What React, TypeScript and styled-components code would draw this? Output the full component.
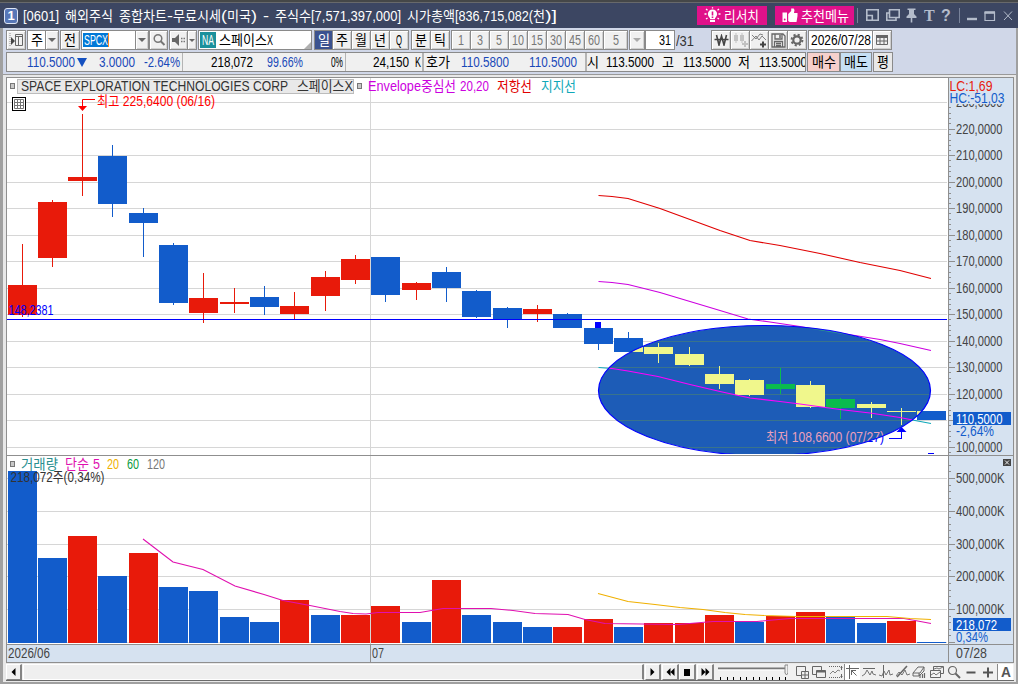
import React, { useLayoutEffect, useRef } from "react";
import styled, { createGlobalStyle, css } from "styled-components";

const FONT = `"Liberation Sans", "Noto Sans CJK KR", sans-serif`;
const RED = "#e81a0a";
const BLUE = "#125ccb";
const GRID = "#d6d6d6";
const LINE = "#8f8f8f";

const Global = createGlobalStyle`
  *, *::before, *::after { box-sizing: border-box; }
  body { margin: 0; background: #a0a0a0; font-family: ${FONT}; overflow: hidden; }
  svg { display: block; flex: none; }
`;

/* ---------- condensed fixed-pitch text ---------- */

const RunBox = styled.span<{ $w: number }>`
  display: inline-block;
  width: ${(p) => p.$w}px;
  height: 100%;
  white-space: pre;
  flex: none;
`;
const RunInner = styled.span`
  display: inline-block;
  transform-origin: 0 50%;
  white-space: pre;
`;
const Line = styled.span<{ $c?: string; $ml?: number; $size?: number; $bold?: boolean }>`
  display: inline-flex;
  flex: none;
  white-space: pre;
  margin-left: ${(p) => p.$ml ?? 0}px;
  color: ${(p) => p.$c ?? "#000"};
  font-size: ${(p) => p.$size ?? 14}px;
  font-weight: ${(p) => (p.$bold ? 700 : 400)};
  line-height: 16px;
  height: 16px;
`;

function Run({ text, w }: { text: string; w: number }) {
  const ref = useRef<HTMLSpanElement>(null);
  useLayoutEffect(() => {
    const el = ref.current;
    if (!el) return;
    el.style.transform = "none";
    const natural = el.getBoundingClientRect().width;
    if (natural > 0) el.style.transform = `scaleX(${w / natural})`;
  }, [text, w]);
  return (
    <RunBox $w={w}>
      <RunInner ref={ref}>{text}</RunInner>
    </RunBox>
  );
}

const isWide = (s: string) => /[\uAC00-\uD7A3]/.test(s);

type TextProps = { children: string; c?: string; ml?: number; w?: number; size?: number; bold?: boolean };

/* Latin cells are 6px wide and Hangul cells 12px, unless a total width is given. */
function T({ children, c, ml, w, size, bold }: TextProps) {
  if (w) {
    return (
      <Line $c={c} $ml={ml} $size={size} $bold={bold}>
        <Run text={children} w={w} />
      </Line>
    );
  }
  const runs = children.match(/[\uAC00-\uD7A3]+|\s+|[^\uAC00-\uD7A3\s]+/g) ?? [];
  return (
    <Line $c={c} $ml={ml} $size={size} $bold={bold}>
      {runs.map((r, i) => (
        <Run key={i} text={r} w={r.length * (isWide(r) ? 12 : 6)} />
      ))}
    </Line>
  );
}

/* ---------- window frame ---------- */

const Window = styled.div`
  width: 1018px;
  height: 684px;
  display: flex;
  flex-direction: column;
  background: #a0a0a0;
  overflow: hidden;
`;
const TopStrip = styled.div`
  height: 3px;
  background: #454748;
  border-bottom: 1px solid #68696b;
`;
const TitleBar = styled.header`
  height: 25px;
  background: #3c4662;
  display: flex;
  align-items: center;
  padding-left: 4px;
`;
const Badge = styled.span`
  width: 14px;
  height: 16px;
  flex: none;
  border-radius: 3px;
  border: 1px solid #dfe6f5;
  background: #5877b8;
  color: #fff;
  font-size: 13px;
  font-weight: 700;
  line-height: 14px;
  text-align: center;
  margin-right: 5px;
`;
const Pill = styled.button<{ $w: number; $ml: number }>`
  all: unset;
  box-sizing: border-box;
  flex: none;
  width: ${(p) => p.$w}px;
  height: 19px;
  margin-left: ${(p) => p.$ml}px;
  background: #e0118a;
  display: flex;
  align-items: center;
  padding-left: 7px;
`;
const Body = styled.div`
  flex: 1;
  display: flex;
  flex-direction: column;
  margin: 0 2px 2px 3px;
  background: #e8e8e8;
`;

/* ---------- toolbar ---------- */

const Tools = styled.div`
  height: 47px;
  background: #d0d7e8;
  border-bottom: 1px solid #999;
  padding: 2px 0 0 3px;
`;
const Row = styled.div`
  height: 20px;
  display: flex;
  align-items: stretch;
  margin-bottom: 2px;
`;
const Box = styled.div<{ $w: number; $ml?: number; $bg?: string; $flat?: boolean; $align?: string; $pr?: number }>`
  width: ${(p) => p.$w}px;
  flex: none;
  margin-left: ${(p) => p.$ml ?? 0}px;
  padding-right: ${(p) => p.$pr ?? 0}px;
  border: 1px solid #8a8a8a;
  background: ${(p) => p.$bg ?? "#f0f0f0"};
  display: flex;
  align-items: center;
  justify-content: ${(p) => p.$align ?? "center"};
  overflow: hidden;
  ${(p) =>
    !p.$flat &&
    css`
      box-shadow: inset 1px 1px 0 #fff, inset -1px -1px 0 #cfcfcf;
    `}
`;
const Caret = styled.i<{ $c?: string; $s?: number }>`
  border: ${(p) => p.$s ?? 4}px solid transparent;
  border-top-color: ${(p) => p.$c ?? "#666"};
  border-bottom: 0;
`;
const DownMark = styled.i`
  align-self: center;
  margin-left: 2px;
  border: solid transparent;
  border-width: 9px 5.5px 0;
  border-top-color: #1450c0;
`;
const Selected = styled.span`
  background: #0078d7;
  border-right: 1px solid #ff8a20;
  height: 14px;
  display: flex;
  align-items: center;
  margin-left: 1px;
`;
const Tag = styled.span`
  background: #1b909c;
  width: 16px;
  height: 16px;
  margin-left: 1px;
  display: flex;
  align-items: center;
  justify-content: center;
`;
const Corner = styled.i`
  margin-left: auto;
  align-self: flex-end;
  border-left: 7px solid transparent;
  border-bottom: 7px solid #b0b0b0;
`;
const Total = styled.span`
  padding-top: 2px;
  margin-left: 1px;
`;
const Quotes = styled.div`
  width: 800px;
  flex: none;
  border: 1px solid #8a8a8a;
  background: #f0f0f0;
  display: flex;
  align-items: center;
  overflow: hidden;
`;
const Split = styled.i<{ $ml: number; $w?: number }>`
  width: ${(p) => p.$w ?? 1}px;
  height: 18px;
  flex: none;
  background: #b4b4b4;
  margin-left: ${(p) => p.$ml}px;
`;

/* ---------- chart panes ---------- */

const Frame = styled.main`
  margin: 2px 2px 0 3px;
  height: 586px;
  border: 1px solid ${LINE};
  background: #fff;
`;
const Pane = styled.section<{ $h: number }>`
  position: relative;
  height: ${(p) => p.$h}px;
  border-bottom: 1px solid ${LINE};
  display: flex;
`;
const AxisCol = styled.div`
  width: 65px;
  border-left: 1px solid ${LINE};
  background: #d6e2f0;
`;
const Legend = styled.div`
  position: absolute;
  left: 3px;
  top: 0;
  display: flex;
  align-items: center;
  height: 16px;
`;
const Dot = styled.i<{ $ml?: number }>`
  width: 5px;
  height: 6px;
  border: 1px solid #777;
  background: #c8c8c8;
  margin-left: ${(p) => p.$ml ?? 0}px;
`;
const NameBox = styled.div`
  width: 337px;
  height: 15px;
  margin-left: 2px;
  border: 1px solid #bcbcbc;
  background: #e9e9e9;
  display: flex;
  align-items: center;
  padding-left: 3px;
`;
const DateBand = styled.div`
  height: 17px;
  display: flex;
  background: #d6e2f0;
`;
const DateCell = styled.div<{ $w?: number; $pad: number; $line?: boolean }>`
  ${(p) => (p.$w ? `width: ${p.$w}px;` : "flex: 1;")}
  padding-left: ${(p) => p.$pad}px;
  border-left: ${(p) => (p.$line ? `1px solid ${LINE}` : "0")};
  display: flex;
  align-items: flex-start;
`;

/* ---------- bottom bar ---------- */

const BottomBar = styled.footer`
  height: 17px;
  margin: 1px 2px 0 3px;
  display: flex;
  background: #f0f0f0;
  border-bottom: 1px solid #6a6a6a;
`;
const Key = styled.button<{ $w: number; $ml?: number }>`
  all: unset;
  box-sizing: border-box;
  width: ${(p) => p.$w}px;
  height: 16px;
  margin-left: ${(p) => p.$ml ?? 0}px;
  border: 1px solid #fff;
  border-right: 2px solid #848484;
  border-bottom-color: #848484;
  background: #f0f0f0;
  display: flex;
  align-items: center;
  justify-content: center;
`;
const Thumb = styled.div`
  width: 621px;
  height: 16px;
  margin-left: 1px;
  border: 1px solid #fff;
  border-right: 2px solid #848484;
  background: #efefef;
`;
const ToolIcon = styled.span<{ $on?: boolean; $w?: number; $ml?: number }>`
  width: ${(p) => p.$w ?? 17}px;
  height: 16px;
  margin-left: ${(p) => p.$ml ?? 0}px;
  display: flex;
  align-items: center;
  justify-content: center;
  background: ${(p) => (p.$on ? "#fff" : "transparent")};
  border-left: ${(p) => (p.$on ? "1px solid #8a8a8a" : "0")};
`;

/* ---------- data ---------- */

// [direction, bodyTop, bodyBottom, wickTop, wickBottom, volumeTop]
type Candle = [string, number, number, number, number, number];
const candles: Candle[] = [
  ["r", 285, 315, 244, 317, 471], ["r", 202, 258, 200, 267, 558], ["r", 177, 181, 114, 196, 536],
  ["b", 156, 204, 145, 217, 576], ["b", 213, 223, 208, 257, 553], ["b", 245, 303, 243, 305, 587],
  ["r", 298, 313, 273, 323, 591], ["r", 302, 304, 288, 313, 617], ["b", 297, 307, 286, 315, 622],
  ["r", 306, 314, 292, 319, 600], ["r", 277, 296, 271, 311, 615], ["r", 259, 280, 255, 284, 615],
  ["b", 257, 295, 257, 302, 606], ["r", 283, 290, 282, 300, 622], ["b", 272, 288, 267, 302, 580],
  ["b", 291, 317, 290, 318, 615], ["b", 308, 319, 307, 328, 622], ["r", 309, 314, 305, 322, 627],
  ["b", 314, 328, 313, 328, 627], ["b", 328, 344, 328, 350, 619], ["b", 338, 352, 332, 352, 627],
  ["b", 347, 354, 343, 363, 623], ["b", 354, 365, 347, 366, 623], ["b", 374, 384, 366, 389, 615],
  ["b", 380, 395, 379, 396, 622], ["r", 384, 389, 368, 394, 616], ["b", 385, 407, 381, 408, 612],
  ["r", 399, 408, 398, 419, 617], ["b", 404, 408, 402, 418, 623], ["b", 411, 412, 408, 425, 621],
  ["b", 411, 420, 411, 420, 642],
];
const volumeColors = "bbrbrbbbbrbrrbrbbbrrbrrrbrrbbrb";
const startX = (i: number) => 8 + Math.floor(i * 30.325);

const priceGrid = [102, 129, 155, 182, 208, 235, 261, 288, 314, 341, 367, 394, 420, 447];
const volumeGrid = [478, 511, 544, 576, 609, 642];

function Candles({ up, down }: { up: string; down: string }) {
  return (
    <g shapeRendering="crispEdges">
      {candles.map(([d, bt, bb, wt, wb], i) => (
        <g key={i} fill={d === "r" ? up : down}>
          <rect x={startX(i)} y={bt} width={29} height={bb - bt} />
          <rect x={startX(i) + 14} y={wt} width={1} height={wb - wt} />
        </g>
      ))}
    </g>
  );
}

type LabelProps = { x: number; y: number; w: number; fill?: string; children: string; size?: number };
function Label({ x, y, w, fill = "#444", children, size = 14 }: LabelProps) {
  return (
    <text x={x} y={y} textLength={w} lengthAdjust="spacingAndGlyphs" fontSize={size} fill={fill} fontFamily={FONT}>
      {children}
    </text>
  );
}

const lowerBand = "598.5,367.5 612,368.5 628,371 658,376.5 690,384.5 720,391.5 750,398 780,401.5 800,404 840,409.5 870,413 900,417.5 915,420.5 931,423.5";
const midBand = "598.5,281.5 612,282.5 628,284.5 660,292.5 690,301.5 720,310.5 748,319 770,322 800,326.5 830,331.5 855,335.5 880,339.5 900,343.5 931,350.5";

function PriceChart() {
  return (
    <svg width={941} height={377} viewBox="7 78 941 377">
      <defs>
        <clipPath id="oval">
          <ellipse cx={764.5} cy={390.5} rx={166} ry={65} />
        </clipPath>
      </defs>
      <g fill={GRID} shapeRendering="crispEdges">
        {priceGrid.map((y) => (
          <rect key={y} x={7} y={y} width={940} height={1} />
        ))}
        <rect x={370} y={78} width={1} height={377} />
      </g>
      <Candles up={RED} down={BLUE} />
      <rect x={595} y={322} width={6} height={6} fill="#00f" />
      <polyline fill="none" stroke="#e00000" strokeWidth={1.1} points="598.5,195.5 612,196.5 628,198.5 660,208.5 690,219.5 720,230.5 750,240.5 780,245.5 820,253.5 860,262.5 900,270.5 931,278.5" />
      <polyline fill="none" stroke="#cc00e0" strokeWidth={1.1} points={midBand} />
      <polyline fill="none" stroke="#10a8b8" strokeWidth={1.1} points={lowerBand} />
      <Label x={766} y={442} w={118} fill="#00f">최저 108,6600 (07/27)</Label>
      <g clipPath="url(#oval)">
        <rect x={590} y={320} width={350} height={134} fill="#1d5cb7" />
        <g fill="#39738c" shapeRendering="crispEdges">
          {priceGrid.map((y) => (
            <rect key={y} x={590} y={y} width={350} height={1} />
          ))}
        </g>
        <polyline fill="none" stroke="#2f9c8a" points={midBand} />
        <Candles up="#0abb4e" down="#f0f78c" />
        <polyline fill="none" stroke="#f0f" strokeWidth={1.2} points={lowerBand} />
        <Label x={766} y={442} w={118} fill="#eba0bb">최저 108,6600 (07/27)</Label>
      </g>
      <svg x={590} y={320} width={350} height={134} viewBox="590 320 350 134">
        <ellipse cx={764.5} cy={390.5} rx={166} ry={65} fill="none" stroke="#00f" strokeWidth={1.2} />
      </svg>
      <g fill="#00f" shapeRendering="crispEdges">
        <rect x={7} y={319} width={940} height={1} />
        <rect x={901} y={431} width={1} height={8} />
        <rect x={889} y={438} width={13} height={1} />
        <rect x={928} y={453} width={6} height={1} />
      </g>
      <path d="M901.5 427l5 5h-10z" fill="#00f" />
      <Label x={8.5} y={315} w={45} fill="#00f">148,2381</Label>
      <Label x={97} y={106} w={118} fill="#f00">최고 225,6400 (06/16)</Label>
      <path d="M95 99.5H82.5V106" stroke="#f00" fill="none" />
      <path d="M78 106h9l-4.5 5z" fill="#f00" />
      <rect x={12.5} y={97.5} width={13} height={13} fill="#fff" stroke="#000" />
      <path d="M14.5 99.5h9v9h-9zM14.5 102.5h9M14.5 105.5h9M17.5 99.5v9M20.5 99.5v9" stroke="#777" fill="none" />
    </svg>
  );
}

function PriceAxis() {
  return (
    <svg width={64} height={377} viewBox="949 78 64 377">
      <g fill={LINE} shapeRendering="crispEdges">
        {priceGrid.map((y) => (
          <g key={y}>
            <rect x={949} y={y} width={6} height={1} />
            {[5.3, 10.6, 15.9, 21.2].map((d) => (
              <rect key={d} x={949} y={Math.round(y + d)} width={2} height={1} />
            ))}
          </g>
        ))}
      </g>
      {priceGrid.map((y, i) =>
        y === 420 ? null : (
          <Label key={y} x={956} y={y + 4.5} w={46.5}>{`${230 - i * 10},0000`}</Label>
        )
      )}
      <rect x={949} y={78} width={64} height={26} fill="#d6e2f0" />
      <Label x={949.5} y={90.5} w={43} fill={RED}>LC:1,69</Label>
      <Label x={949.5} y={102.5} w={55} fill={BLUE}>HC:-51,03</Label>
      <rect x={953} y={412} width={58} height={13} fill={BLUE} />
      <Label x={956} y={423.5} w={46.5} fill="#fff">110,5000</Label>
      <Label x={956} y={435.5} w={38} fill={BLUE}>-2,64%</Label>
    </svg>
  );
}

function VolumeChart() {
  return (
    <svg width={941} height={188} viewBox="7 456 941 188">
      <g fill={GRID} shapeRendering="crispEdges">
        {volumeGrid.map((y) => (
          <rect key={y} x={7} y={y} width={940} height={1} />
        ))}
        <rect x={370} y={456} width={1} height={188} />
        {candles.map((c, i) => (
          <rect key={i} x={startX(i)} y={c[5]} width={29} height={643 - c[5]} fill={volumeColors[i] === "r" ? RED : BLUE} />
        ))}
      </g>
      <polyline fill="none" stroke="#e010b0" strokeWidth={1.1} points="143,539 173,562 203,569.5 235,586 264,594.5 283,600.5 310,605.5 340,611.5 353,613.5 366,614 378,612.5 420,612.5 443,608.5 491,608.5 513,610.5 535,613.5 568,614.5 585,619.5 605,623.5 678,624.5 713,621.5 757,621.5 790,618.5 904,618.5 915,620.5 931,623.5" />
      <polyline fill="none" stroke="#f0b000" strokeWidth={1.2} points="598,593.5 628,601.5 655,604.5 680,607.5 703,609.5 725,612.5 745,614.5 764,615.5 797,616.5 887,616.5 910,618.5 931,619.5" />
      <Label x={10.5} y={482} w={94} fill="#333">218,072주(0,34%)</Label>
    </svg>
  );
}

function VolumeAxis() {
  return (
    <svg width={64} height={188} viewBox="949 456 64 188">
      <g fill={LINE} shapeRendering="crispEdges">
        {volumeGrid.map((y) => (
          <rect key={y} x={949} y={y} width={6} height={1} />
        ))}
        {Array.from({ length: 28 }, (_, i) => (
          <rect key={i} x={949} y={Math.round(642 - i * 6.56)} width={2} height={1} />
        ))}
      </g>
      {[500, 400, 300, 200, 100].map((v, i) => (
        <Label key={v} x={956} y={volumeGrid[i] + 4.5} w={48.5}>{`${v},000K`}</Label>
      ))}
      <rect x={953} y={618} width={58} height={13} fill={BLUE} />
      <Label x={956} y={629.5} w={41} fill="#fff">218,072</Label>
      <Label x={956} y={641.5} w={32} fill={BLUE}>0,34%</Label>
      <rect x={1003} y={459} width={8} height={7} fill="#444" />
      <path d="M1005 460.500l4 4M1009 460.500l-4 4" stroke="#eee" />
    </svg>
  );
}

/* ---------- title icons ---------- */

const TitleIcons = () => (
  <svg width={164} height={25} viewBox="854 3 164 25" fill="none" stroke="#b4bccb" strokeWidth={1.6}>
    <path d="M857.5 8v15M959.5 8v15" stroke="#78829a" strokeWidth={1} />
    <path d="M866.8 16V9.800h11.400v10.400H873M866.8 15.500h5.500v4.700h-5.500z" />
    <path d="M889.5 9.800h9.700v7.700h-9.700zM889 13h-2.200v7.200h9.200V18" />
    <path d="M907.5 8.500h8v1.500h-1.500v4l2.500 2.500v1.500h-10v-1.500l2.500-2.500v-4h-1.500z" fill="#b4bccb" stroke="none" />
    <path d="M911.5 17v5.500" />
    <path d="M967 19h10" strokeWidth={2.4} />
    <path d="M985 12.500h9.500v8H985z" strokeWidth={1.2} />
    <path d="M984.5 12.500h10.500" strokeWidth={2.6} />
    <path d="M1004 11.500l8 8.500M1012 11.500l-8 8.500" strokeWidth={1} />
    <text x={924} y={20.5} fontFamily="Liberation Serif, serif" fontWeight={700} fontSize={16} fill="#b4bccb" stroke="none">T</text>
    <text x={941} y={20.5} fontFamily={FONT} fontWeight={700} fontSize={16} fill="#b4bccb" stroke="none">?</text>
  </svg>
);

const Bulb = () => (
  <svg width={17} height={17} viewBox="0 0 17 17">
    <circle cx={8.5} cy={7} r={4.6} fill="#fff" />
    <path d="M6 10.500h5v4.500h-5z" fill="#fff" />
    <path d="M8.500 4.500v4M8.500 9.500v1.500" stroke="#e0118a" strokeWidth={1.6} />
    <path d="M6 12.500h5" stroke="#e0118a" strokeWidth={0.8} />
    <path d="M0.500 7h2M14.500 7h2M2 2l1.500 1.200M15 2l-1.500 1.200M8.500 0.200v1.300M2 12l1.500-1M15 12l-1.500-1" stroke="#fff" strokeWidth={1.3} />
  </svg>
);
const ThumbUp = () => (
  <svg width={16} height={15} viewBox="0 0 16 15" fill="#fff">
    <path d="M0.500 4.500h4.500v9.500h-4.500zM6.200 6l3-3V0.500h2.500l0.800 1.500-0.500 3H15.500v3l-1 6H7.700L6.200 13z" />
    <circle cx={2.700} cy={11.500} r={0.900} fill="#e0118a" />
  </svg>
);

const stroke = { fill: "none", stroke: "#666" } as const;

function PeriodButtons() {
  const units: [string, number][] = [["주", -1], ["월", -1], ["년", -1], ["Q", -1], ["분", 2], ["틱", -1]];
  const minutes: [string, number, number][] = [["1", 20, 1], ["3", 20, -1], ["5", 20, -1], ["10", 20, -1], ["15", 20, -1], ["30", 20, -1], ["45", 20, -1], ["60", 20, -1], ["5", 25, -1]];
  return (
    <>
      <Box $w={19} $ml={2} $bg="#3b528f" $flat><T c="#fff">일</T></Box>
      {units.map(([t, ml]) => (
        <Box key={t} $w={20} $ml={ml}><T>{t}</T></Box>
      ))}
      {minutes.map(([t, w, ml], i) => (
        <Box key={i} $w={w} $ml={ml}><T c="#777">{t}</T></Box>
      ))}
    </>
  );
}

function Toolbar() {
  return (
    <Tools>
      <Row>
        <Box $w={20}>
          <svg width={15} height={14} viewBox="0 0 15 14"><path d="M1 0v14" stroke="#888" strokeDasharray="1 1" /><path d="M2 4l4 4-4 4z" fill="#444" /><path d="M6.500 1.500h7v11h-7zM6.500 3.500h7M9.500 3v9" {...stroke} /></svg>
        </Box>
        <Box $w={19} $ml={1} $bg="#fff" $flat><T>주</T></Box>
        <Box $w={14} $ml={-1}><Caret /></Box>
        <Box $w={20} $ml={1}><T>전</T></Box>
        <Box $w={55} $ml={1} $bg="#fff" $flat $align="flex-start"><Selected><T c="#fff" ml={1}>SPCX</T></Selected></Box>
        <Box $w={14} $ml={-1}><Caret /></Box>
        <Box $w={19}>
          <svg width={14} height={14} viewBox="0 0 14 14"><circle cx={6} cy={5.5} r={3.8} stroke="#777" strokeWidth={1.5} fill="none" /><path d="M8.500 8l4 4" stroke="#777" strokeWidth={2} /></svg>
        </Box>
        <Box $w={19} $ml={1}>
          <svg width={15} height={12} viewBox="0 0 15 12"><path d="M1 4h3l4-4v12l-4-4H1z" fill="#666" /><path d="M10 4.500h4M10 7.500h4" stroke="#777" strokeDasharray="1.5 1" strokeWidth={1.5} /></svg>
        </Box>
        <Box $w={10} $ml={-1}><Caret $s={3} /></Box>
        <Box $w={114} $ml={1} $bg="#fff" $flat $align="flex-start"><Tag><T c="#fff">NA</T></Tag><T ml={3}>스페이스X</T><Corner /></Box>
        <PeriodButtons />
        <Box $w={16} $ml={1}><Caret $c="#aaa" /></Box>
        <Box $w={30} $ml={0} $bg="#fff" $flat $align="flex-end" $pr={3}><T>31</T></Box>
        <Total><T c="#333">/31</T></Total>
        <Box $w={20} $ml={17}>
          <svg width={15} height={12} viewBox="0 0 15 12"><path d="M2.500 1l2.500 10 2.500-9 2.500 9L12.500 1M0.500 5.500h14" fill="none" stroke="#444" strokeWidth={1.6} /></svg>
        </Box>
        <Box $w={20} $ml={-1}>
          <svg width={15} height={14} viewBox="0 0 15 14" fill="#c2c2c2"><path d="M1 2h4v6H1zM7 2h4v6H7zM2.500 0h1v10h-1zM8.500 0h1v10h-1zM9 10h6v2H9zM11 8h2v6h-2z" /></svg>
        </Box>
        <Box $w={20} $ml={-1}>
          <svg width={16} height={15} viewBox="0 0 16 15"><path d="M0.500 8l4.500-5 3 4 3-4 4 4M1 2l4 4 4-5 3 1" {...stroke} strokeWidth={0.8} /><path d="M9 11.500h6M12 8.500v6" stroke="#444" strokeWidth={2} /></svg>
        </Box>
        <Box $w={20} $ml={-1}>
          <svg width={15} height={15} viewBox="0 0 15 15"><path d="M1 1h11l2 2v11H1zM4 1v5h7V1M3.500 14V8.500h8V14M5 10.500h5M5 12.500h5" {...stroke} strokeWidth={1.3} /><path d="M9 2v3" stroke="#666" strokeWidth={1.5} /></svg>
        </Box>
        <Box $w={20} $ml={-1}>
          <svg width={14} height={14} viewBox="0 0 14 14"><circle cx={7} cy={7} r={3.7} stroke="#666" strokeWidth={2.2} fill="none" /><circle cx={7} cy={7} r={5.4} stroke="#666" strokeWidth={2} fill="none" strokeDasharray="2.12 2.12" /></svg>
        </Box>
        <Box $w={65} $ml={1} $bg="#fff" $flat><T>2026/07/28</T></Box>
        <Box $w={20} $ml={-1}>
          <svg width={12} height={12} viewBox="0 0 12 12"><path d="M0.500 1.500h11v9H0.500zM4 4v7M8 4v7M1 7h10" {...stroke} /><path d="M0 1h12v3H0z" fill="#666" /></svg>
        </Box>
      </Row>
      <Row>
        <Quotes>
          <T ml={20} c="#1848b8">110.5000</T>
          <DownMark />
          <T ml={12} c="#1848b8">3.0000</T>
          <T ml={9} c="#1848b8">-2.64%</T>
          <Split $ml={2} />
          <T ml={28}>218,072</T>
          <T ml={14} c="#1848b8">99.66%</T>
          <T ml={28}>0%</T>
          <Split $ml={2} />
          <T ml={27}>24,150 K</T>
          <Split $ml={1} $w={2} />
          <T ml={2}>호가</T>
          <T ml={11} c="#1848b8">110.5800</T>
          <T ml={20} c="#1848b8">110.5000</T>
          <Split $ml={8} $w={2} />
          <T ml={0}>시</T>
          <T ml={7}>113.5000</T>
          <T ml={8}>고</T>
          <T ml={9}>113.5000</T>
          <T ml={7}>저</T>
          <T ml={9}>113.5000</T>
        </Quotes>
        <Box $w={33} $ml={1} $bg="#f6d0cc" $flat><T>매수</T></Box>
        <Box $w={32} $ml={0} $bg="#c6dff4" $flat><T>매도</T></Box>
        <Box $w={20} $ml={1} $bg="#e8e8e8" $flat><T>평</T></Box>
      </Row>
    </Tools>
  );
}

function BottomTools() {
  return (
    <>
      <svg width={74} height={16} viewBox="714 664 74 16">
        <path d="M718 668.500h68" stroke="#777" strokeWidth={2} />
        <path d="M718 670h68" stroke="#fff" />
        {Array.from({ length: 11 }, (_, i) => (
          <rect key={i} x={Math.round(720 + i * 6.5)} y={677} width={1} height={3} />
        ))}
        <path d="M785 665h3v8l-1.500 2-1.500-2z" fill="#f0f0f0" stroke="#888" />
      </svg>
      <ToolIcon $ml={5}><svg width={14} height={14} viewBox="0 0 14 14" {...stroke}><path d="M6 10.500H1.500v-9h9V6" /><path d="M6.500 6.500h7v7h-7zM10 7v6M7 10h6" /></svg></ToolIcon>
      <ToolIcon><svg width={14} height={14} viewBox="0 0 14 14" {...stroke}><path d="M4 9.500H0.500v-8h9V5" /><path d="M4.500 5.500h9v7h-9z" /><path d="M4.500 6.500h9" strokeWidth={2} /></svg></ToolIcon>
      <ToolIcon><svg width={14} height={14} viewBox="0 0 14 14" {...stroke}><path d="M0 1.500h13M0 12.500h13" strokeDasharray="1 1" /><path d="M1 9l3-3 2 2 3-3 2 1" strokeWidth={0.8} /><path d="M12.500 2v3M12.500 9v3M11.500 3l1-1 1 1M11.500 11l1 1 1-1" /></svg></ToolIcon>
      <ToolIcon $on $w={16}><svg width={13} height={14} viewBox="0 0 13 14" {...stroke}><path d="M0 3.500h13M3.500 0v14M5 5.500h5M5.500 5v5M5.500 5.500l5 5" /></svg></ToolIcon>
      <ToolIcon><svg width={14} height={14} viewBox="0 0 14 14" {...stroke}><path d="M1 3.500h12" /><path d="M0 11l3-2 2-4 3 5 2-4 1 3 3 1" strokeWidth={0.9} /></svg></ToolIcon>
      <ToolIcon><svg width={14} height={14} viewBox="0 0 14 14" {...stroke}><path d="M4.500 0v13" /><path d="M0 10l3 1 2-5 2 4 3-5 1 5 3-1" strokeWidth={0.9} /></svg></ToolIcon>
      <ToolIcon><svg width={14} height={14} viewBox="0 0 14 14" {...stroke}><path d="M1 12L11 1" strokeWidth={1.6} /><path d="M0 11l3-4 3 3 3-5 2 5 3-1" strokeWidth={0.9} /></svg></ToolIcon>
      <ToolIcon><svg width={15} height={14} viewBox="0 0 15 14" {...stroke}><path d="M1 8l5-6h6l-4 6zM1 8v3h6V8M7 11l5-5V2" /><path d="M8 9v4M10.500 9v4M12.500 8v5" strokeWidth={1.2} /></svg></ToolIcon>
      <ToolIcon><svg width={14} height={14} viewBox="0 0 14 14" {...stroke}><path d="M3.500 5V1.500h10v7H11" /><path d="M0.500 5.500h10v7h-10z" fill="#f4f4f4" /><path d="M1 10l3-2 2 2 4-3M4 4l3-1 2 1 4-2" strokeWidth={0.9} /></svg></ToolIcon>
      <ToolIcon><svg width={14} height={14} viewBox="0 0 14 14" {...stroke}><circle cx={5.5} cy={5.5} r={4} strokeWidth={1.2} /><path d="M8.500 8.500l4.500 4.500" strokeWidth={2} /></svg></ToolIcon>
      <ToolIcon><svg width={12} height={14} viewBox="0 0 12 14"><path d="M1.500 7.500h9" stroke="#555" strokeWidth={2} /></svg></ToolIcon>
      <ToolIcon $w={18}><svg width={12} height={14} viewBox="0 0 12 14"><path d="M1 7.500h10M6 2.500v10" stroke="#555" strokeWidth={2} /></svg></ToolIcon>
      <ToolIcon $on $w={16}><T c="#555" w={10} size={14} bold>A</T></ToolIcon>
    </>
  );
}

export default function App() {
  return (
    <Window>
      <Global />
      <TopStrip />
      <TitleBar>
        <Badge>1</Badge>
        <T c="#fff">[0601] 해외주식 종합차트-무료시세(미국) - 주식수[7,571,397,000] 시가총액[836,715,082(천)]</T>
        <Pill $w={70} $ml={140}><Bulb /><T c="#fff" ml={3} w={35}>리서치</T></Pill>
        <Pill $w={79} $ml={8}><ThumbUp /><T c="#fff" ml={3} w={48}>추천메뉴</T></Pill>
        <TitleIcons />
      </TitleBar>
      <Body>
        <Toolbar />
        <Frame>
          <Pane $h={378}>
            <PriceChart />
            <AxisCol><PriceAxis /></AxisCol>
            <Legend>
              <Dot />
              <NameBox>
                <T c="#333" w={267}>SPACE EXPLORATION TECHNOLOGIES CORP</T>
                <T c="#333" ml={9} w={56}>스페이스X</T>
              </NameBox>
              <Dot $ml={3} />
              <T c="#cc00e0" ml={6} w={88}>Envelope중심선</T>
              <T c="#cc00e0" ml={4} w={29}>20,20</T>
              <T c="#e00000" ml={8} w={35}>저항선</T>
              <T c="#10a8b8" ml={9} w={35}>지지선</T>
            </Legend>
          </Pane>
          <Pane $h={189}>
            <VolumeChart />
            <AxisCol><VolumeAxis /></AxisCol>
            <Legend>
              <Dot />
              <T c="#2a9090" ml={6} w={37}>거래량</T>
              <T c="#e010b0" ml={7} w={24}>단순</T>
              <T c="#e010b0" ml={4} w={7}>5</T>
              <T c="#f0b000" ml={7} w={12}>20</T>
              <T c="#0a9a3c" ml={8} w={12}>60</T>
              <T c="#777" ml={8} w={18}>120</T>
            </Legend>
          </Pane>
          <DateBand>
            <DateCell $w={363} $pad={1}><T c="#444" w={42}>2026/06</T></DateCell>
            <DateCell $w={578} $pad={1} $line><T c="#444" w={12}>07</T></DateCell>
            <DateCell $pad={7} $line><T c="#444" w={31}>07/28</T></DateCell>
          </DateBand>
        </Frame>
        <BottomBar>
          <Key $w={16}><svg width={5} height={8} viewBox="0 0 5 8"><path d="M4.500 0v8L0.500 4z" /></svg></Key>
          <Thumb />
          <Key $w={16} $ml={1}><svg width={5} height={8} viewBox="0 0 5 8"><path d="M0.500 0v8l4-4z" /></svg></Key>
          <Key $w={17} $ml={1}><svg width={9} height={8} viewBox="0 0 9 8"><path d="M4.500 0v8l-4-4zM8.500 0v8l-4-4z" /></svg></Key>
          <Key $w={17} $ml={0}><svg width={6} height={7} viewBox="0 0 6 7"><path d="M0 0h6v7H0z" /></svg></Key>
          <Key $w={17} $ml={1}><svg width={9} height={8} viewBox="0 0 9 8"><path d="M0.500 0v8l4-4zM4.500 0v8l4-4z" /></svg></Key>
          <BottomTools />
        </BottomBar>
      </Body>
    </Window>
  );
}
